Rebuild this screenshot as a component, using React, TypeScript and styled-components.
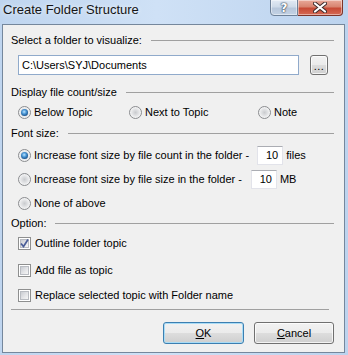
import styled, { createGlobalStyle } from "styled-components";

const GlobalStyle = createGlobalStyle`
  html, body {
    margin: 0;
    padding: 0;
  }
  body {
    font-family: "Liberation Sans", Arial, sans-serif;
    font-size: 11px;
    color: #000;
  }
`;

const Window = styled.div`
  width: 348px;
  height: 355px;
  box-sizing: border-box;
  display: flex;
  flex-direction: column;
  padding: 0 3px 2px 2px;
  background: linear-gradient(to right, #bfd5ef 0%, #cfe1f6 45%, #bcd3ee 100%);
  overflow: hidden;
`;

const TitleBar = styled.div`
  height: 24px;
  flex-shrink: 0;
  display: flex;
  align-items: flex-start;
`;

const Title = styled.div`
  flex: 1;
  padding: 2px 0 0 1px;
  font-size: 13px;
  line-height: 16px;
  color: #151515;
  text-shadow: 0 0 5px rgba(255, 255, 255, 0.9);
`;

const CaptionButtons = styled.div`
  display: flex;
  margin: -1px 2px 0 0;
`;

const CaptionButton = styled.div<{ $close?: boolean }>`
  height: 17px;
  width: ${(p) => (p.$close ? 45 : 28)}px;
  box-sizing: border-box;
  display: flex;
  align-items: center;
  justify-content: center;
  border: 1px solid ${(p) => (p.$close ? "#7d3429" : "#6e8198")};
  border-left-width: ${(p) => (p.$close ? 0 : 1)}px;
  border-radius: ${(p) => (p.$close ? "0 0 4px 0" : "0 0 0 4px")};
  background: ${(p) =>
    p.$close
      ? "linear-gradient(to bottom, #e9a99a 0%, #d88470 45%, #c74a35 55%, #d56a55 100%)"
      : "linear-gradient(to bottom, #e2eaf4 0%, #cfdbe9 45%, #b7c7db 55%, #c3d2e4 100%)"};
  box-shadow: inset 0 0 0 1px rgba(255, 255, 255, 0.45);
  font-family: "DejaVu Sans", sans-serif;
  font-weight: bold;
  font-size: 12px;
  color: #fff;
  text-shadow: 0 0 1px #3a4658, 0 0 1px #3a4658, 0 0 2px #3a4658;
`;

const Content = styled.div`
  flex: 1;
  display: flex;
  flex-direction: column;
  background: #f0f0f0;
  border: 1px solid #75879c;
  padding: 8px 10px 0 8px;
`;

const SectionHeader = styled.div<{ $mt: number }>`
  display: flex;
  align-items: center;
  height: 14px;
  margin-top: ${(p) => p.$mt}px;
  white-space: nowrap;
`;

const HeaderLine = styled.div`
  flex: 1;
  margin-left: 9px;
  border-top: 1px solid #a0a0a0;
`;

const Row = styled.div<{ $mt: number; $h?: number }>`
  display: flex;
  align-items: center;
  height: ${(p) => p.$h ?? 20}px;
  margin-top: ${(p) => p.$mt}px;
  padding-left: 7px;
  white-space: nowrap;
`;

const RadioGrid = styled.div<{ $mt: number }>`
  display: grid;
  grid-template-columns: 111px 129px auto;
  height: 14px;
  margin-top: ${(p) => p.$mt}px;
  padding-left: 7px;
`;

const Choice = styled.label`
  display: flex;
  align-items: center;
  gap: 2px;
  white-space: nowrap;
`;

const RadioMark = styled.span<{ $on?: boolean }>`
  position: relative;
  width: 13px;
  height: 13px;
  box-sizing: border-box;
  border-radius: 50%;
  border: 1px solid #8a8c8f;
  background: radial-gradient(circle at 50% 50%, #c9cbce 0%, #e4e5e7 45%, #fbfbfb 80%);
  flex-shrink: 0;
  margin-right: 1px;

  &::after {
    content: "";
    display: ${(p) => (p.$on ? "block" : "none")};
    position: absolute;
    left: 2px;
    top: 2px;
    width: 7px;
    height: 7px;
    border-radius: 50%;
    background: radial-gradient(circle at 45% 40%, #bfe6ff 0%, #4f9bd9 35%, #154f8a 75%, #0c3665 100%);
  }
`;

const CheckMark = styled.span`
  width: 13px;
  height: 13px;
  box-sizing: border-box;
  border: 1px solid #8e8f8f;
  background: #fff;
  padding: 1px;
  flex-shrink: 0;
  margin-right: 2px;
  display: flex;
`;

const CheckInner = styled.span`
  flex: 1;
  background: linear-gradient(135deg, #c9ccd2 0%, #e4e5e8 55%, #f6f6f6 100%);
  border: 1px solid #b9bcc2;
  position: relative;
`;

const PathInput = styled.div`
  width: 281px;
  height: 20px;
  box-sizing: border-box;
  border: 1px solid #90aacb;
  background: #fff;
  display: flex;
  align-items: center;
  padding-left: 3px;
`;

const NumberBox = styled.div<{ $ml: number }>`
  width: 26px;
  height: 19px;
  box-sizing: border-box;
  margin-left: ${(p) => p.$ml}px;
  border: 1px solid #e2e3ea;
  border-top-color: #abadb3;
  background: #fff;
  display: flex;
  align-items: center;
  justify-content: flex-end;
  padding-right: 4px;
`;

const Unit = styled.span`
  margin-left: 3px;
`;

const PushButton = styled.button<{ $w: number; $h: number; $default?: boolean }>`
  width: ${(p) => p.$w}px;
  height: ${(p) => p.$h}px;
  box-sizing: border-box;
  padding: 0;
  font-family: "Liberation Sans", Arial, sans-serif;
  font-size: 11px;
  color: #000;
  border-radius: 3px;
  border: 1px solid ${(p) => (p.$default ? "#3c7fb1" : "#707070")};
  background: linear-gradient(to bottom, #f2f2f2 0%, #ebebeb 50%, #dddddd 51%, #cfcfcf 100%);
  box-shadow: inset 0 0 0 1px ${(p) => (p.$default ? "#a9dcf6" : "rgba(255,255,255,0.75)")};
  display: flex;
  align-items: center;
  justify-content: center;
`;

const BrowseButton = styled(PushButton)`
  margin-left: 11px;
  align-items: flex-end;
  padding-bottom: 4px;
  letter-spacing: 0.5px;
  line-height: 8px;
`;

const Separator = styled.div`
  margin: 7px 5px 0 0;
  border-top: 1px solid #a0a0a0;
`;

const ButtonRow = styled.div`
  display: flex;
  justify-content: flex-end;
  gap: 10px;
  margin-top: 12px;
`;

const Key = styled.span`
  text-decoration: underline;
`;

const Check = ({ checked }: { checked?: boolean }) => (
  <CheckMark>
    <CheckInner>
      {checked && (
        <svg width="11" height="11" viewBox="0 0 11 11" style={{ position: "absolute", left: -2, top: -2 }}>
          <path d="M2 5.5 L4.5 8.5 L9 1.5" fill="none" stroke="#4a5e98" strokeWidth="1.7" />
        </svg>
      )}
    </CheckInner>
  </CheckMark>
);

export default function App() {
  return (
    <>
      <GlobalStyle />
      <Window>
        <TitleBar>
          <Title>Create Folder Structure</Title>
          <CaptionButtons>
            <CaptionButton>?</CaptionButton>
            <CaptionButton $close>
              <svg width="14" height="11" viewBox="0 0 14 11">
                <path d="M2 1.5 L12 9.5 M12 1.5 L2 9.5" stroke="#3b2a2a" strokeWidth="4" strokeLinecap="round" />
                <path d="M2 1.5 L12 9.5 M12 1.5 L2 9.5" stroke="#fff" strokeWidth="2.2" strokeLinecap="round" />
              </svg>
            </CaptionButton>
          </CaptionButtons>
        </TitleBar>
        <Content>
          <SectionHeader $mt={0}>
            Select a folder to visualize:
            <HeaderLine />
          </SectionHeader>
          <Row $mt={8}>
            <PathInput>C:\Users\SYJ\Documents</PathInput>
            <BrowseButton $w={18} $h={20}>...</BrowseButton>
          </Row>

          <SectionHeader $mt={10}>
            Display file count/size
            <HeaderLine />
          </SectionHeader>
          <RadioGrid $mt={6}>
            <Choice>
              <RadioMark $on />
              Below Topic
            </Choice>
            <Choice>
              <RadioMark />
              Next to Topic
            </Choice>
            <Choice>
              <RadioMark />
              Note
            </Choice>
          </RadioGrid>

          <SectionHeader $mt={7}>
            Font size:
            <HeaderLine />
          </SectionHeader>
          <Row $mt={5}>
            <Choice>
              <RadioMark $on />
              Increase font size by file count in the folder -
            </Choice>
            <NumberBox $ml={8}>10</NumberBox>
            <Unit>files</Unit>
          </Row>
          <Row $mt={4}>
            <Choice>
              <RadioMark />
              Increase font size by file size in the folder -
            </Choice>
            <NumberBox $ml={9}>10</NumberBox>
            <Unit>MB</Unit>
          </Row>
          <Row $mt={4}>
            <Choice>
              <RadioMark />
              None of above
            </Choice>
          </Row>

          <SectionHeader $mt={3}>
            Option:
            <HeaderLine />
          </SectionHeader>
          <Row $mt={6} $h={14}>
            <Choice>
              <Check checked />
              Outline folder topic
            </Choice>
          </Row>
          <Row $mt={13} $h={14}>
            <Choice>
              <Check />
              Add file as topic
            </Choice>
          </Row>
          <Row $mt={11} $h={14}>
            <Choice>
              <Check />
              Replace selected topic with Folder name
            </Choice>
          </Row>

          <Separator />
          <ButtonRow>
            <PushButton $w={81} $h={22} $default>
              <Key>O</Key>K
            </PushButton>
            <PushButton $w={80} $h={22}>
              <Key>C</Key>ancel
            </PushButton>
          </ButtonRow>
        </Content>
      </Window>
    </>
  );
}
